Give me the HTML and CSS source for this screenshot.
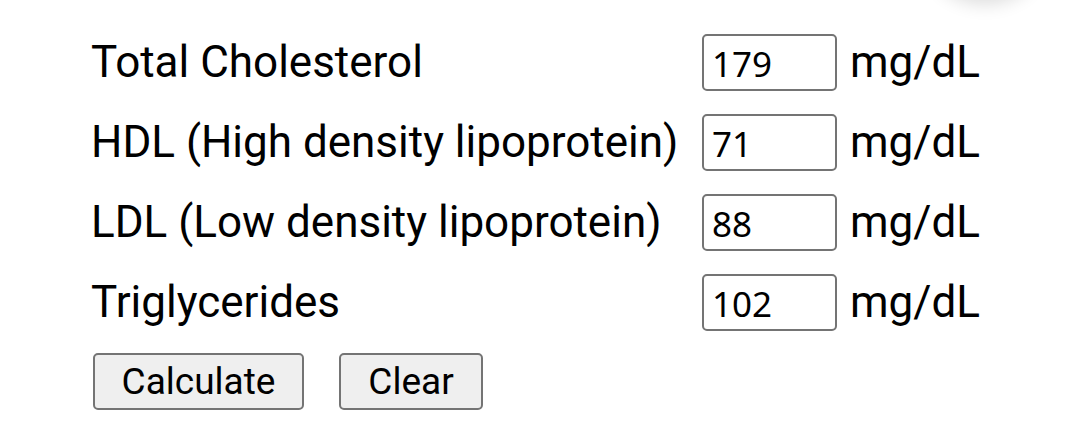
FILE: index.html
```html
<!DOCTYPE html>
<html lang="en">
<head>
  <meta charset="UTF-8" />
  <title>Cholesterol Ratio Calculator</title>
  <link rel="stylesheet" href="styles.css">
</head>
<body>
  <div class="fab-shadow"></div>
  <form class="calc">
    <div class="rows">
      <label class="label" for="tc">Total Cholesterol</label>
      <input class="field" id="tc" type="text" value="179">
      <span class="unit">mg/dL</span>

      <label class="label" for="hdl">HDL (High density lipoprotein)</label>
      <input class="field" id="hdl" type="text" value="71">
      <span class="unit">mg/dL</span>

      <label class="label" for="ldl">LDL (Low density lipoprotein)</label>
      <input class="field" id="ldl" type="text" value="88">
      <span class="unit">mg/dL</span>

      <label class="label" for="tg">Triglycerides</label>
      <input class="field" id="tg" type="text" value="102">
      <span class="unit">mg/dL</span>
    </div>
    <div class="actions">
      <button type="button" class="btn calc-btn">Calculate</button>
      <button type="reset" class="btn clear-btn">Clear</button>
    </div>
  </form>
</body>
</html>
```

FILE: styles.css
```css
* {
  box-sizing: border-box;
}

body {
  margin: 0;
  background: #fff;
  font-family: Roboto, 'Noto Sans', sans-serif;
  color: #000;
  overflow: hidden;
}

.fab-shadow {
  position: absolute;
  top: -70px;
  left: 935px;
  width: 100px;
  height: 70px;
  border-radius: 50%;
  box-shadow: 0 4px 18px rgba(0, 0, 0, 0.14);
}

.calc {
  padding: 34px 0 0 91px;
}

.rows {
  display: grid;
  grid-template-columns: 611px 135px max-content;
  grid-auto-rows: 57px;
  row-gap: 23px;
  align-items: center;
}

.label {
  font-size: 44px;
  line-height: 57px;
  white-space: nowrap;
}

.field {
  width: 135px;
  height: 57px;
  padding: 2px 8px 0;
  border: 2px solid #747474;
  border-radius: 5px;
  font-family: 'Noto Sans', sans-serif;
  font-size: 35px;
  color: #000;
  background: #fff;
}

.unit {
  font-size: 44px;
  padding-left: 13px;
  line-height: 57px;
}

.actions {
  display: flex;
  gap: 35px;
  margin: 22px 0 0 2px;
}

.btn {
  height: 57px;
  padding: 0;
  border: 2px solid #747474;
  border-radius: 5px;
  background: #efefef;
  font-family: Roboto, sans-serif;
  font-size: 37px;
  color: #000;
}

.calc-btn {
  width: 211px;
}

.clear-btn {
  width: 144px;
}
```
